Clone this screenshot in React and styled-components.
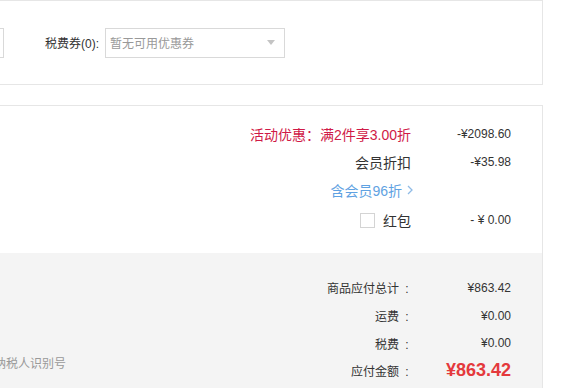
import React from 'react'
import styled, { createGlobalStyle } from 'styled-components'

const GlobalStyle = createGlobalStyle`
    html, body {
        margin:0;
        padding:0;
        background:#fff;
        overflow:hidden;
    }
    body {
        font-family:"Liberation Sans", Arial, "Noto Sans CJK SC", sans-serif;
        color:#333;
    }
`

const discounts = [
    { label: '活动优惠：满2件享3.00折', value: '-¥2098.60', tone: 'red' },
    { label: '会员折扣', value: '-¥35.98' },
]

const totals = [
    { label: '商品应付总计', value: '¥863.42' },
    { label: '运费', value: '¥0.00' },
    { label: '税费', value: '¥0.00' },
]

function App() {
    return (
        <Page>
            <GlobalStyle />
            <CouponPanel>
                <Field>
                    <TextInput />
                </Field>
                <Field>
                    <FieldLabel>税费券(0):</FieldLabel>
                    <Select>
                        <SelectText>暂无可用优惠券</SelectText>
                        <Caret />
                    </Select>
                </Field>
            </CouponPanel>

            <OrderPanel>
                <Discounts>
                    {discounts.map(d => (
                        <Row key={d.label}>
                            <Label tone={d.tone}>{d.label}</Label>
                            <Value>{d.value}</Value>
                        </Row>
                    ))}
                    <Row>
                        <Label tone="blue">
                            含会员96折
                            <Chevron viewBox="0 0 8 12">
                                <path d="M2 2 L6 6 L2 10" fill="none" stroke="#8fbbe6" strokeWidth="1.3" />
                            </Chevron>
                        </Label>
                        <Value />
                    </Row>
                    <Row tall>
                        <Label>
                            <Checkbox />
                            红包
                        </Label>
                        <Value>- ¥ 0.00</Value>
                    </Row>
                </Discounts>

                <Summary>
                    <InvoiceSide>
                        <Hint>纳税人识别号</Hint>
                    </InvoiceSide>
                    <Totals>
                        {totals.map(t => (
                            <Row key={t.label} small>
                                <SmallLabel>{t.label}<Colon>:</Colon></SmallLabel>
                                <Value>{t.value}</Value>
                            </Row>
                        ))}
                        <Row small>
                            <SmallLabel>应付金额<Colon>:</Colon></SmallLabel>
                            <Value big>¥863.42</Value>
                        </Row>
                    </Totals>
                </Summary>
            </OrderPanel>
        </Page>
    )
}

export default App

const Page = styled.div`
    width:703px;
    margin-left:-160px;
`

const CouponPanel = styled.div`
    border:1px solid #e6e6e6;
    height:85px;
    box-sizing:border-box;
    display:flex;
    align-items:center;
    gap:41px;
    padding-left:19px;
`

const Field = styled.div`
    display:flex;
    align-items:center;
    gap:6px;
    font-size:12px;
`

const TextInput = styled.div`
    width:144px;
    height:30px;
    box-sizing:border-box;
    border:1px solid #d9d9d9;
`

const FieldLabel = styled.span`
    color:#333;
`

const Select = styled.div`
    width:180px;
    height:30px;
    box-sizing:border-box;
    border:1px solid #d9d9d9;
    display:flex;
    align-items:center;
    justify-content:space-between;
    padding:0 9px 0 4px;
`

const SelectText = styled.span`
    color:#999;
`

const Caret = styled.span`
    width:0;
    height:0;
    border-left:4px solid transparent;
    border-right:4px solid transparent;
    border-top:5px solid #c4c4c4;
`

const OrderPanel = styled.div`
    margin-top:20px;
    border:1px solid #e6e6e6;
    border-bottom:none;
`

const Discounts = styled.div`
    padding:14px 31px 17px 0;
`

const Row = styled.div`
    display:flex;
    justify-content:flex-end;
    align-items:center;
    height:${p => (p.tall ? '32px' : p.small ? '27.7px' : '28px')};
`

const Label = styled.span`
    display:flex;
    align-items:center;
    font-size:14px;
    color:${p => (p.tone === 'red' ? '#d01a47' : p.tone === 'blue' ? '#5fa2e2' : '#333')};
`

const Chevron = styled.svg`
    width:8px;
    height:12px;
    margin-left:4px;
    margin-right:-3px;
`

const Checkbox = styled.span`
    width:15px;
    height:15px;
    box-sizing:border-box;
    border:1px solid #d4d4d4;
    background:#fff;
    margin-right:8px;
`

const Value = styled.span`
    width:100px;
    text-align:right;
    font-size:${p => (p.big ? '18px' : '12px')};
    font-weight:${p => (p.big ? 700 : 400)};
    color:${p => (p.big ? '#e4393c' : '#333')};
`

const Summary = styled.div`
    background:#f4f4f4;
    display:flex;
    justify-content:space-between;
    padding:21px 31px 4px 0;
`

const InvoiceSide = styled.div`
    display:flex;
    align-items:flex-end;
    padding-left:153px;
    padding-bottom:14px;
`

const Hint = styled.span`
    font-size:12px;
    color:#999;
`

const Totals = styled.div`
    display:flex;
    flex-direction:column;
`

const SmallLabel = styled.span`
    font-size:12px;
    color:#333;
`

const Colon = styled.span`
    display:inline-block;
    width:12px;
    margin-left:2px;
    margin-right:-2px;
    text-align:center;
`
